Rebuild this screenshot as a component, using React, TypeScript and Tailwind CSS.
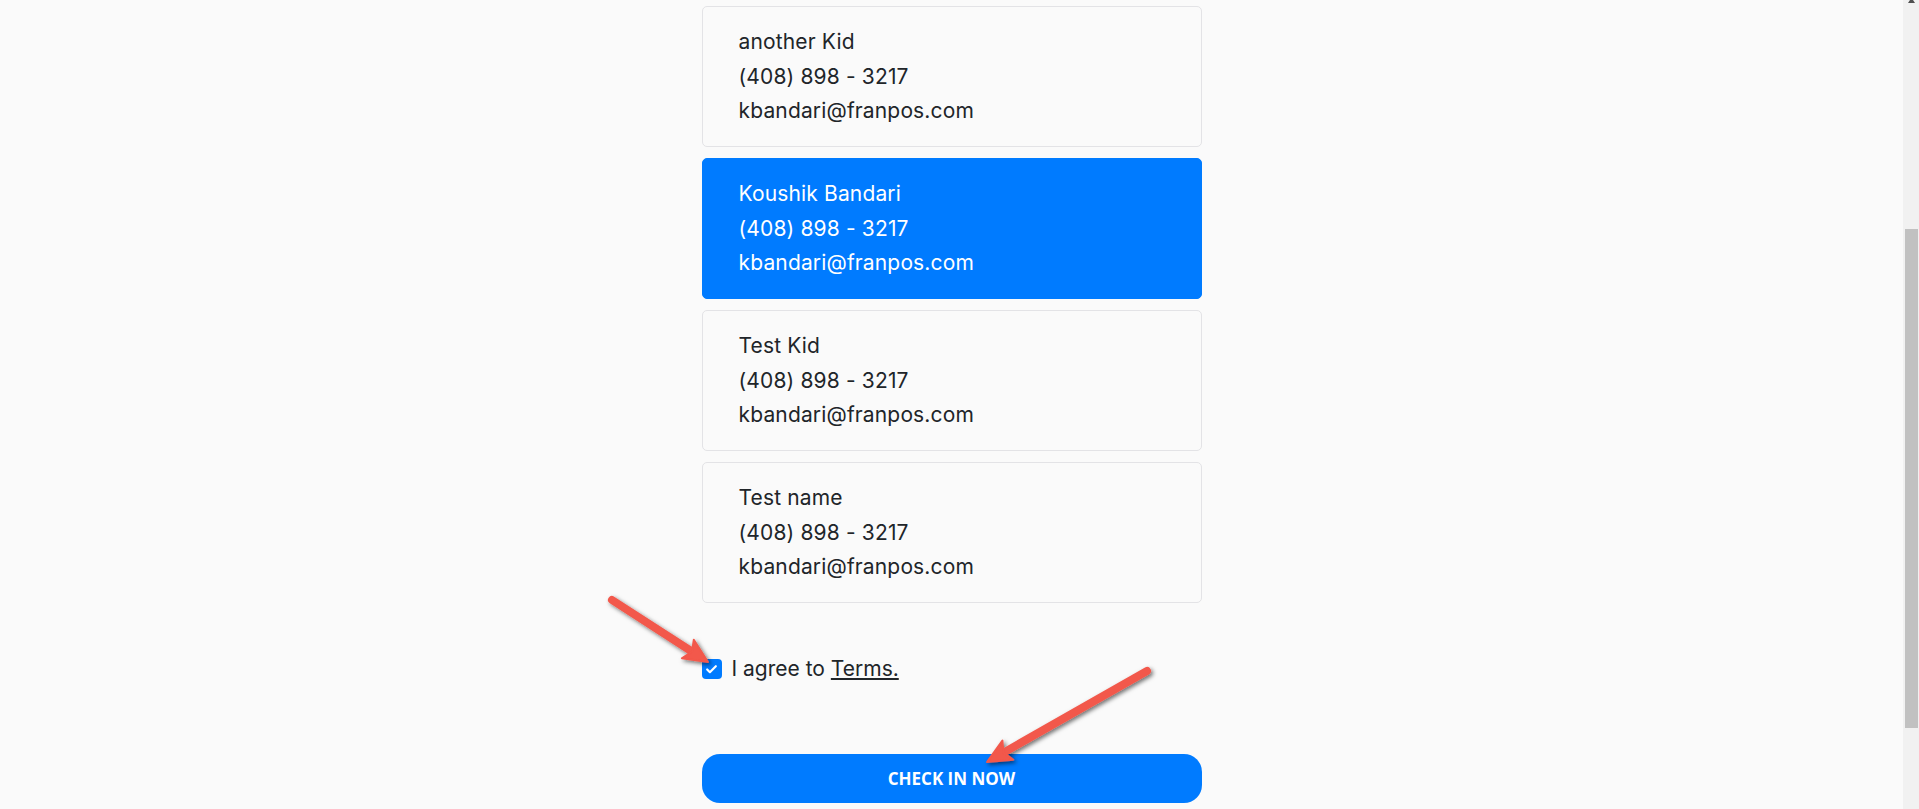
import { Check } from "lucide-react";

const kids = [
  { id: 1, name: "another Kid", phone: "(408) 898 - 3217", email: "kbandari@franpos.com" },
  { id: 2, name: "Koushik Bandari", phone: "(408) 898 - 3217", email: "kbandari@franpos.com" },
  { id: 3, name: "Test Kid", phone: "(408) 898 - 3217", email: "kbandari@franpos.com" },
  { id: 4, name: "Test name", phone: "(408) 898 - 3217", email: "kbandari@franpos.com" },
];

const selectedId = 2;

type Pt = [number, number];

// annotation arrow: tail -> tip
const Arrow = ({ from, to }: { from: Pt; to: Pt }) => {
  const dx = to[0] - from[0];
  const dy = to[1] - from[1];
  const len = Math.hypot(dx, dy);
  const ux = dx / len;
  const uy = dy / len;
  const headLen = 24;
  const headW = 11;
  const bx = to[0] - ux * headLen;
  const by = to[1] - uy * headLen;
  const nx = -uy;
  const ny = ux;
  const notchX = to[0] - ux * (headLen - 5);
  const notchY = to[1] - uy * (headLen - 5);
  const head = [
    `${to[0]},${to[1]}`,
    `${bx + nx * headW},${by + ny * headW}`,
    `${notchX},${notchY}`,
    `${bx - nx * headW},${by - ny * headW}`,
  ].join(" ");
  return (
    <g filter="url(#arrowShadow)">
      <line
        x1={from[0]}
        y1={from[1]}
        x2={notchX}
        y2={notchY}
        stroke="#f2584b"
        strokeWidth={8}
        strokeLinecap="round"
      />
      <polygon points={head} fill="#f2584b" strokeLinejoin="round" stroke="#f2584b" strokeWidth={2} />
    </g>
  );
};

const App = () => {
  return (
    <div className="relative flex h-screen overflow-hidden bg-[#fafafa] text-[#212529] font-['Inter','Noto_Sans',sans-serif]">
      {/* PAGE */}
      <div className="flex-1 overflow-hidden">
        <div className="mx-auto w-[500px] pt-[6px]">
          {/* KIDS */}
          <div className="flex flex-col gap-[11px]">
            {kids.map((kid) => (
              <div
                key={kid.id}
                className={`rounded-[5px] border pl-[36px] pt-[18px] pb-[17.5px] text-[21px] leading-[34.5px] tracking-[0.15px] ${
                  kid.id === selectedId
                    ? "border-[#007bff] bg-[#007bff] text-white"
                    : "border-[#e3e3e6] bg-[#fafafa]"
                }`}
              >
                <p>{kid.name}</p>
                <p>{kid.phone}</p>
                <p>{kid.email}</p>
              </div>
            ))}
          </div>
          {/* TERMS */}
          <label className="mt-[52px] flex items-center gap-[10px] text-[21px] leading-7">
            <span className="flex h-[20px] w-[20px] items-center justify-center rounded-[4px] bg-[#007bff]">
              <Check className="h-[13px] w-[13px] text-white" strokeWidth={4} />
            </span>
            <span>
              I agree to <span className="underline underline-offset-2">Terms.</span>
            </span>
          </label>
          {/* BUTTON */}
          <button className="mt-[71px] flex h-[49px] w-full items-center justify-center rounded-[18px] bg-[#007bff] font-['Open_Sans',sans-serif] text-[17px] font-bold text-white">
            CHECK IN NOW
          </button>
        </div>
      </div>
      {/* SCROLLBAR */}
      <div className="flex w-[16px] shrink-0 flex-col bg-[#f1f1f1]">
        <svg className="ml-[5px] h-[3px] w-[7px]" viewBox="0 0 7 3">
          <polygon points="2,0 5,0 7,3 0,3" fill="#505050" />
        </svg>
        <div className="ml-[2px] mr-[1px] mt-[226px] h-[499px] bg-[#c1c1c1]" />
      </div>
      {/* ANNOTATIONS */}
      <svg className="pointer-events-none absolute left-0 top-0 h-[809px] w-[1919px]" viewBox="0 0 1919 809">
        <defs>
          <filter id="arrowShadow" x="-20%" y="-20%" width="140%" height="140%">
            <feDropShadow dx="2" dy="2" stdDeviation="2" floodColor="#000" floodOpacity="0.55" />
          </filter>
        </defs>
        <Arrow from={[612, 600]} to={[708, 662]} />
        <Arrow from={[1147, 671]} to={[987, 762]} />
      </svg>
    </div>
  );
};

export default App;
